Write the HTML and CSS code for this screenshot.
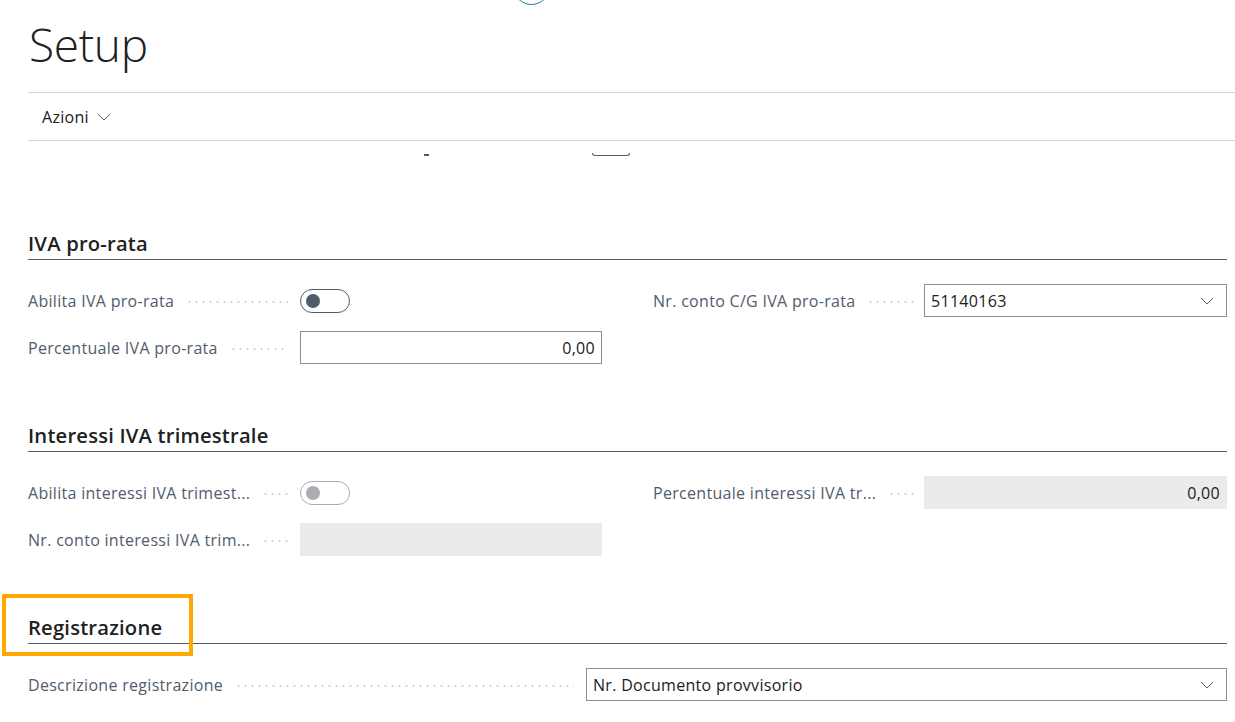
FILE: index.html
```html
<!DOCTYPE html>
<html lang="it">
<head>
<meta charset="utf-8">
<title>Setup</title>
<link rel="stylesheet" href="styles.css">
</head>
<body>
<div class="page">
  <span class="scroll-ring"></span>
  <header class="title-bar">
    <h1 class="title">Setup</h1>
  </header>
  <nav class="action-bar">
    <span class="action">Azioni</span>
    <svg class="action-chevron" width="14" height="8" viewBox="0 0 14 8"><path d="M1 1 L7 7 L13 1" fill="none" stroke="#505c6d" stroke-width="1"/></svg>
  </nav>
  <div class="strip">
    <span class="strip-dash"></span>
    <span class="strip-toggle"></span>
  </div>

  <section class="group first">
    <h2 class="group-title">IVA pro-rata</h2>
    <div class="fields">
      <div class="col">
        <div class="field">
          <span class="label">Abilita IVA pro-rata</span><span class="dots"></span>
          <div class="ctl"><span class="toggle"><span class="knob"></span></span></div>
        </div>
        <div class="field">
          <span class="label">Percentuale IVA pro-rata</span><span class="dots"></span>
          <div class="ctl"><span class="input num">0,00</span></div>
        </div>
      </div>
      <div class="col right">
        <div class="field">
          <span class="label">Nr. conto C/G IVA pro-rata</span><span class="dots"></span>
          <div class="ctl"><span class="input select">51140163<svg class="chev" width="14" height="8" viewBox="0 0 14 8"><path d="M1 1 L7 7 L13 1" fill="none" stroke="#505c6d" stroke-width="1"/></svg></span></div>
        </div>
      </div>
    </div>
  </section>

  <section class="group">
    <h2 class="group-title">Interessi IVA trimestrale</h2>
    <div class="fields">
      <div class="col">
        <div class="field">
          <span class="label">Abilita interessi IVA trimest...</span><span class="dots"></span>
          <div class="ctl"><span class="toggle disabled"><span class="knob"></span></span></div>
        </div>
        <div class="field">
          <span class="label">Nr. conto interessi IVA trim...</span><span class="dots"></span>
          <div class="ctl"><span class="input disabled"></span></div>
        </div>
      </div>
      <div class="col right">
        <div class="field">
          <span class="label">Percentuale interessi IVA tr...</span><span class="dots"></span>
          <div class="ctl"><span class="input num disabled">0,00</span></div>
        </div>
      </div>
    </div>
  </section>

  <section class="group highlighted">
    <span class="highlight-box"></span>
    <h2 class="group-title">Registrazione</h2>
    <div class="fields full">
      <div class="field wide">
        <span class="label">Descrizione registrazione</span><span class="dots"></span>
        <div class="ctl"><span class="input select">Nr. Documento provvisorio<svg class="chev" width="14" height="8" viewBox="0 0 14 8"><path d="M1 1 L7 7 L13 1" fill="none" stroke="#505c6d" stroke-width="1"/></svg></span></div>
      </div>
    </div>
  </section>
</div>
</body>
</html>
```

FILE: styles.css
```css
* { box-sizing: border-box; }
html, body { margin: 0; padding: 0; background: #ffffff; }
body {
  font-family: "Open Sans", "Noto Sans", "Liberation Sans", sans-serif;
  color: #212121;
  width: 1235px;
  height: 722px;
  overflow: hidden;
}
.page { position: relative; padding-left: 28px; }

.scroll-ring {
  position: absolute;
  left: 513px;
  top: -32px;
  width: 37px;
  height: 37px;
  border: 1.5px solid #13878a;
  border-radius: 50%;
}

.title-bar { height: 92px; }
.title {
  margin: 0;
  padding: 8px 0 0 1px;
  font-weight: 300;
  font-size: 46px;
  line-height: 72px;
  letter-spacing: -0.3px;
  color: #212121;
}

.action-bar {
  display: flex;
  align-items: center;
  height: 49px;
  border-top: 1px solid #d6d6d6;
  border-bottom: 1px solid #d6d6d6;
  padding-left: 14px;
  gap: 8px;
}
.action { font-size: 16px; letter-spacing: 0.3px; color: #212121; }
.action-chevron { margin-top: 1px; }

.strip {
  display: flex;
  align-items: flex-end;
  height: 15px;
  padding-left: 396px;
}
.strip-dash { width: 5px; height: 2px; background: #505c6d; }
.strip-toggle {
  margin-left: 163px;
  width: 38px;
  height: 3px;
  border: 1.5px solid #505c6d;
  border-top: none;
  border-radius: 0 0 6px 6px;
}

.group { position: relative; width: 1199px; margin-top: 48px; }
.group.first { margin-top: 71px; }
.group-title {
  margin: 0;
  height: 33px;
  padding: 2px 0 0 0;
  font-size: 20.2px;
  line-height: 28px;
  letter-spacing: 0.2px;
  font-weight: 600;
  color: #212121;
  border-bottom: 1px solid #505c6d;
}

.fields {
  display: grid;
  grid-template-columns: 574px 574px;
  column-gap: 51px;
  padding-top: 17px;
}
.fields.full { grid-template-columns: 1199px; }

.field {
  display: grid;
  grid-template-columns: auto 1fr 302px;
  align-items: center;
  height: 47px;
}
.right .field { grid-template-columns: auto 1fr 303px; }
.field.wide { grid-template-columns: auto 1fr 641px; }

.label {
  font-size: 16px;
  letter-spacing: 0.3px;
  color: #505c6d;
  white-space: nowrap;
}
.dots {
  height: 4px;
  margin: 2px 12px 0 12px;
  background-image: radial-gradient(circle, #c8cbd0 0.9px, transparent 1.2px);
  background-size: 7px 4px;
  background-repeat: repeat-x;
  background-position: left center;
}
.right .dots { margin-right: 10px; }

.ctl { display: flex; align-items: center; }

.toggle {
  display: flex;
  align-items: center;
  width: 50px;
  height: 24px;
  border: 1px solid #505c6d;
  border-radius: 12px;
  padding-left: 5px;
}
.knob {
  width: 14px;
  height: 14px;
  border-radius: 50%;
  background: #505c6d;
}
.toggle.disabled { border-color: #a9acb2; }
.toggle.disabled .knob { background: #a9acb2; }

.input {
  display: flex;
  align-items: center;
  width: 100%;
  height: 33px;
  border: 1px solid #8a8d92;
  padding: 0 6px;
  font-size: 16px;
  letter-spacing: 0.3px;
  color: #212121;
}
.input.num { justify-content: flex-end; }
.input.select { justify-content: space-between; padding-right: 12px; }
.input.disabled { background: #eaebec; border-color: #eaebec; }
.chev { flex: none; }

.highlight-box {
  position: absolute;
  left: -26px;
  top: -17px;
  width: 191px;
  height: 62px;
  border: 4px solid #ffa800;
  pointer-events: none;
}
```
